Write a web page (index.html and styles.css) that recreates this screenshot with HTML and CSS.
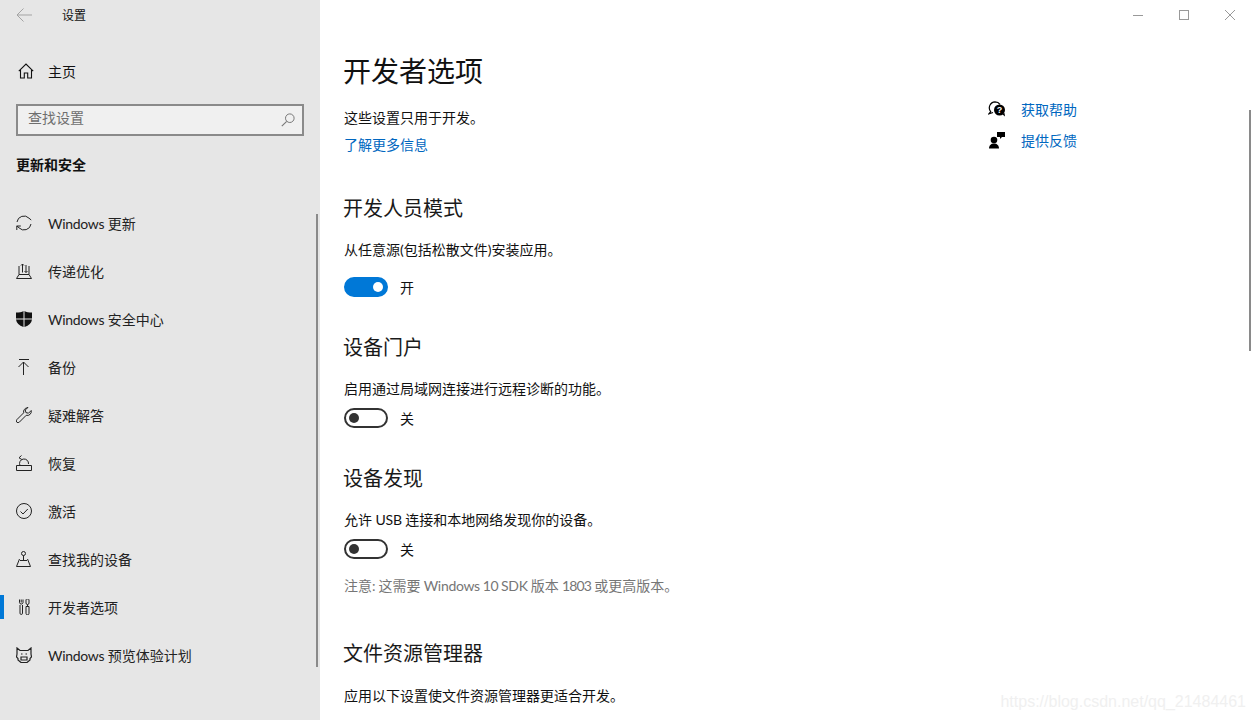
FILE: index.html
```html
<!DOCTYPE html>
<html lang="zh-CN">
<head>
<meta charset="utf-8">
<title>设置</title>
<link rel="stylesheet" href="styles.css">
</head>
<body>
<div class="window">
  <aside class="sidebar">
    <div class="titlebar">
      <svg class="back" width="16" height="16" viewBox="0 0 16 16"><path d="M16 8H1M7.500 1.500 1 8l6.500 6.500" fill="none" stroke="#a3a3a3" stroke-width="1"/></svg>
      <span class="app-title">设置</span>
    </div>
    <a class="home">
      <svg class="icon" width="16" height="16" viewBox="0 0 16 16"><path d="M.8 8.200 8 1l7.200 7.200M2.500 7v8h3.800v-5h3.400v5h3.800V7" fill="none" stroke="#111" stroke-width="1.100"/></svg>
      <span>主页</span>
    </a>
    <div class="search">
      <span class="search-text">查找设置</span>
      <svg width="14" height="14" viewBox="0 0 14 14"><circle cx="8.800" cy="5.200" r="4.300" fill="none" stroke="#777" stroke-width="1"/><path d="M5.700 8.300.8 13.200" stroke="#777" stroke-width="1.100"/></svg>
    </div>
    <h2 class="group">更新和安全</h2>
    <nav class="nav">
      <a class="nav-item">
        <svg class="icon" width="16" height="16" viewBox="0 0 16 16"><path d="M1 7A7 7 0 0 1 13 3.200L15.200 5M15 9A7 7 0 0 1 3 12.800L.8 11M.8 15v-4h4" fill="none" stroke="#222" stroke-width="1"/></svg>
        <span><span class="latin">Windows</span> 更新</span>
      </a>
      <a class="nav-item">
        <svg class="icon" width="16" height="16" viewBox="0 0 16 16"><path d="M3 3v8.500M13 3v8.500M.5 15.500h15M.5 15.500 3 11.500h10l2.500 4M6.500 9.500V1M5 2.500 6.500 1 8 2.500M10 2v7.500M8.500 8 10 9.500 11.500 8" fill="none" stroke="#222" stroke-width="1"/></svg>
        <span>传递优化</span>
      </a>
      <a class="nav-item">
        <svg class="icon" width="16" height="16" viewBox="0 0 16 16"><path d="M0 1.500C3 1.500 6 1 7.500 0v7.500H0zM8.500 0C10 1 13 1.500 16 1.500v6H8.500zM0 8.500h7.500V16C3 14.500.5 12 0 8.500zM8.500 8.500H16C15.500 12 13 14.500 8.500 16z" fill="#111"/></svg>
        <span><span class="latin">Windows</span> 安全中心</span>
      </a>
      <a class="nav-item">
        <svg class="icon" width="16" height="16" viewBox="0 0 16 16"><path d="M3 .5h10M7.500 3v13M2.500 8 7.500 3l5 5" fill="none" stroke="#222" stroke-width="1"/></svg>
        <span>备份</span>
      </a>
      <a class="nav-item">
        <svg class="icon" width="16" height="16" viewBox="0 0 16 16"><path d="M11.500.8a4 4 0 0 0-3.800 5L.8 12.700a1.700 1.700 0 0 0 2.500 2.500l6.900-6.900a4 4 0 0 0 5-4.800l-2.700 2.700-2.600-.6-.6-2.600 2.700-2.700a4 4 0 0 0-.5-.2z" fill="none" stroke="#222" stroke-width="1"/></svg>
        <span>疑难解答</span>
      </a>
      <a class="nav-item">
        <svg class="icon" width="16" height="16" viewBox="0 0 16 16"><path d="M.5 10.500h15v5H.5zM4 10.500A4.500 4.500 0 1 1 12.500 9M5.500.5 3 2.800l2.800 1.700" fill="none" stroke="#222" stroke-width="1"/></svg>
        <span>恢复</span>
      </a>
      <a class="nav-item">
        <svg class="icon" width="16" height="16" viewBox="0 0 16 16"><circle cx="8" cy="8" r="7.500" fill="none" stroke="#222" stroke-width="1"/><path d="m4.500 8.500 2.500 2.500 4.800-5" fill="none" stroke="#222" stroke-width="1"/></svg>
        <span>激活</span>
      </a>
      <a class="nav-item">
        <svg class="icon" width="16" height="16" viewBox="0 0 16 16"><circle cx="7.500" cy="2.500" r="2" fill="none" stroke="#222" stroke-width="1"/><path d="M7.500 4.500v5M4 9.500h7M3.500 8 .5 15.500h14L11.500 8" fill="none" stroke="#222" stroke-width="1"/></svg>
        <span>查找我的设备</span>
      </a>
      <a class="nav-item active">
        <svg class="icon" width="16" height="16" viewBox="0 0 16 16"><path d="M3.500 .5v3.200a1.800 1.800 0 0 0 3.500 0V.5M5.200 .5v3M4 6v8.200a1.200 1.200 0 0 0 2.500 0V6M10 .5c0 0 .5-.5 1.500-.5s1.500.5 1.500.5v3.500a1.500 1.500 0 0 1-3 0zM10 7.500h3v6.800a1.500 1.500 0 0 1-3 0zM11.500 5.500v2" fill="none" stroke="#222" stroke-width="1"/></svg>
        <span>开发者选项</span>
      </a>
      <a class="nav-item">
        <svg class="icon" width="16" height="16" viewBox="0 0 16 16"><path d="M1 1l3 2.500h8L15 1v6l.5 3-1.500 1.500V13L11 15.500H5L2 13V11.500L.5 10 1 7zM5 7h1.500M9.500 7H11M5 10h6v3H5z" fill="none" stroke="#222" stroke-width="1.200"/></svg>
        <span><span class="latin">Windows</span> 预览体验计划</span>
      </a>
    </nav>
    <div class="side-scroll"></div>
  </aside>
  <main class="main">
    <div class="content">
      <div class="column">
        <h1>开发者选项</h1>
        <p class="intro">这些设置只用于开发。</p>
        <a class="link">了解更多信息</a>
        <h3 class="first">开发人员模式</h3>
        <p class="desc">从任意源(包括松散文件)安装应用。</p>
        <div class="toggle-row on-row"><span class="toggle on"></span><span>开</span></div>
        <h3>设备门户</h3>
        <p class="desc">启用通过局域网连接进行远程诊断的功能。</p>
        <div class="toggle-row"><span class="toggle"></span><span>关</span></div>
        <h3>设备发现</h3>
        <p class="desc">允许 <span class="latin">USB</span> 连接和本地网络发现你的设备。</p>
        <div class="toggle-row"><span class="toggle"></span><span>关</span></div>
        <p class="note">注意: 这需要 <span class="latin">Windows 10 SDK</span> 版本 <span class="digits">1803</span> 或更高版本。</p>
        <h3 class="files">文件资源管理器</h3>
        <p class="desc">应用以下设置使文件资源管理器更适合开发。</p>
      </div>
      <div class="help">
        <a class="help-item">
          <svg width="18" height="16" viewBox="0 0 18 16"><path d="M5 11.500 1 12.800l1.700-2.200A6 6 0 0 1 7 .8c2 0 4 1 5 2.500" fill="none" stroke="#000" stroke-width="1.200"/><circle cx="11.500" cy="9" r="5.500" fill="#000"/><path d="m14 13 3 2.500-.5-3.500z" fill="#000"/><text x="11.500" y="12" class="q">?</text></svg>
          <span>获取帮助</span>
        </a>
        <a class="help-item">
          <svg width="18" height="18" viewBox="0 0 18 18"><path d="M9 1h8v5h-3l-2 2V6H9z" fill="#000"/><circle cx="6" cy="9" r="3.300" fill="#000"/><path d="M1 17.500c0-3 2-5 5-5s5 2 5 5z" fill="#000"/></svg>
          <span>提供反馈</span>
        </a>
      </div>
    </div>
    <div class="window-controls">
      <svg width="46" height="30" viewBox="0 0 46 30"><path d="M18 15.500h10" stroke="#999" stroke-width="1"/></svg>
      <svg width="46" height="30" viewBox="0 0 46 30"><rect x="18.500" y="10.500" width="9" height="9" fill="none" stroke="#999" stroke-width="1"/></svg>
      <svg width="46" height="30" viewBox="0 0 46 30"><path d="m18 10 10 10M28 10 18 20" stroke="#999" stroke-width="1"/></svg>
    </div>
    <div class="main-scroll"></div>
  </main>
</div>
<div class="watermark">https://blog.csdn.net/qq_21484461</div>
</body>
</html>
```

FILE: styles.css
```css
* { box-sizing: border-box; }
html, body { margin: 0; height: 100%; overflow: hidden; }
body {
  font-family: "Lato", "Noto Sans CJK SC", sans-serif;
  font-size: 14px;
  color: #1a1a1a;
  background: #fff;
}
h1, h2, h3, p { margin: 0; font-weight: 400; }
.window { display: flex; height: 720px; position: relative; overflow: hidden; }
.latin { letter-spacing: -0.3px; }
.digits { letter-spacing: -0.8px; }

.sidebar {
  width: 320px;
  flex: none;
  background: #e6e6e6;
  position: relative;
  display: flex;
  flex-direction: column;
}
.titlebar { display: flex; align-items: center; height: 32px; padding-left: 16px; }
.back { margin-right: 30px; margin-top: -2px; }
.app-title { font-size: 12px; color: #111; line-height: 30px; }
.home {
  display: flex;
  align-items: center;
  height: 48px;
  margin-top: 15px;
  padding-left: 18px;
  color: #111;
}
.home .icon { margin-right: 14px; }
.search {
  margin: 9px 16px 0 16px;
  height: 32px;
  border: 2px solid #8a8a8a;
  background: #f0f0f0;
  display: flex;
  align-items: center;
  justify-content: space-between;
  padding: 0 7px 0 10px;
  color: #6e6e6e;
  width: 288px;
}
.search-text { line-height: 20px; margin-top: -5px; }
.group { font-size: 14px; font-weight: 700; color: #111; margin: 17px 0 0 16px; line-height: 24px; }
.nav { margin-top: 22px; display: flex; flex-direction: column; }
.nav-item {
  height: 48px;
  display: flex;
  align-items: center;
  padding-left: 16px;
  position: relative;
  color: #222;
}
.nav-item .icon { margin-right: 16px; flex: none; }
.nav-item.active::before {
  content: "";
  position: absolute;
  left: 0;
  top: 12px;
  width: 4px;
  height: 24px;
  background: #0078d7;
}
.side-scroll {
  position: absolute;
  left: 316px;
  top: 214px;
  width: 2px;
  height: 453px;
  background: #8a8a8a;
}

.main { flex: 1; position: relative; min-width: 0; }
.content { display: flex; padding: 48px 0 0 24px; }
.column { width: 645px; flex: none; }
h1 { font-size: 28px; line-height: 46px; color: #111; margin-left: -1px; }
.intro { line-height: 20px; margin-top: 14px; color: #111; }
.link { display: block; color: #0067c0; line-height: 20px; margin-top: 7px; }
h3 { font-size: 20px; line-height: 28px; color: #1a1a1a; margin-top: 36px; margin-left: -1px; }
h3.first { margin-top: 39px; }
h3.files { margin-top: 43px; }
.desc { line-height: 20px; margin-top: 18px; color: #111; }
.files + .desc { margin-top: 19px; }
.toggle-row { display: flex; align-items: center; gap: 12px; height: 20px; margin-top: 9px; color: #111; }
.on-row { margin-top: 17px; }
.toggle {
  width: 44px;
  height: 20px;
  border-radius: 10px;
  border: 2px solid #333;
  position: relative;
  flex: none;
}
.toggle::after {
  content: "";
  position: absolute;
  left: 3px;
  top: 3px;
  width: 10px;
  height: 10px;
  border-radius: 50%;
  background: #333;
}
.toggle.on { background: #0078d7; border-color: #0078d7; }
.toggle.on::after { left: 27px; background: #fff; }
.note { color: #767676; line-height: 20px; margin-top: 17px; word-spacing: -0.5px; }

.help { margin-top: 45px; display: flex; flex-direction: column; margin-left: -1px; }
.help-item { display: flex; align-items: center; height: 31px; gap: 15px; color: #0067c0; }
.help-item svg { flex: none; }
.q { font: 700 9px "Liberation Sans", sans-serif; fill: #fff; text-anchor: middle; }

.window-controls { position: absolute; top: 0; right: 0; display: flex; padding-right: 0; }
.main-scroll {
  position: absolute;
  left: 929px;
  top: 110px;
  width: 2px;
  height: 241px;
  background: #8a8a8a;
}
.watermark {
  position: absolute;
  right: 7px;
  bottom: 9px;
  font: 16px "Liberation Sans", sans-serif;
  color: #f0f0f0;
}
```
